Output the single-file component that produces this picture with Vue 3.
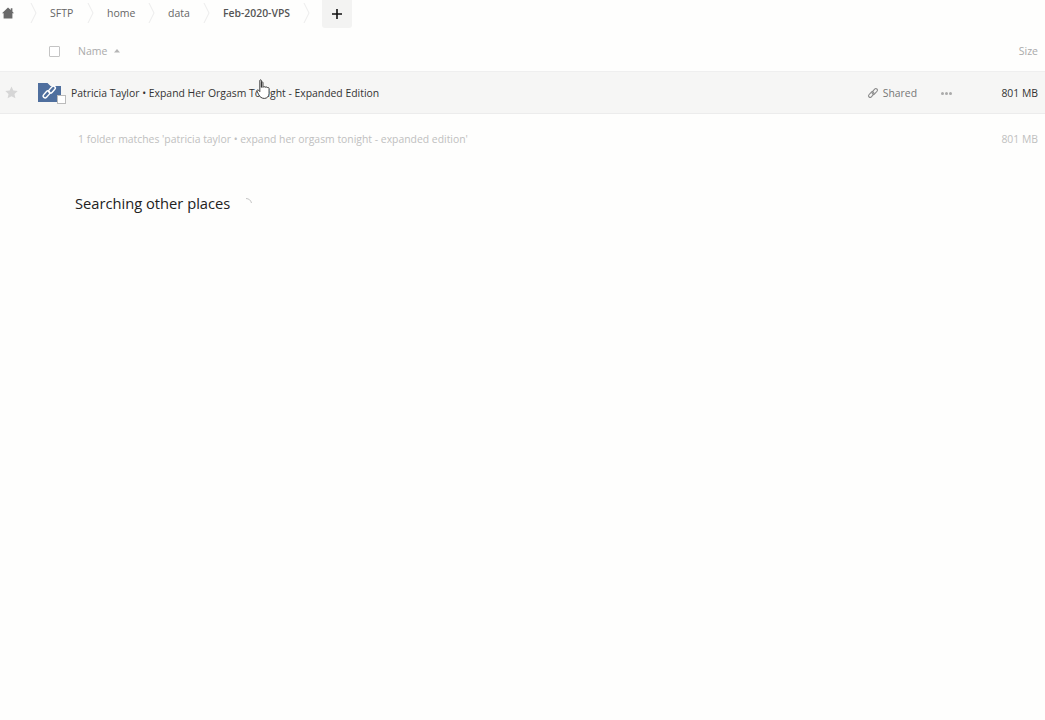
<script setup>
const crumbs = [
  { label: 'SFTP', width: 57 },
  { label: 'home', width: 61 },
  { label: 'data', width: 55 },
  { label: 'Feb-2020-VPS', width: 100, current: true },
]
</script>

<template>
  <div class="page">
    <nav class="crumbs">
      <div class="home">
        <svg width="12" height="12" viewBox="0 0 12 12"><path d="M6 .5 0 6.200h1.600V11.500h8.800V6.200H12L10.400 4.600V1.200H8.800v1.900z" fill="#6a6a6a"/></svg>
      </div>
      <div class="chev first"><svg width="8" height="28" viewBox="0 0 8 28"><path d="M1 3l5 10-5 10" fill="none" stroke="#ececec"/></svg></div>
      <div v-for="c in crumbs" :key="c.label" class="crumb" :class="{ current: c.current }" :style="{ width: c.width + 'px' }">
        <span>{{ c.label }}</span>
        <svg class="sep" width="8" height="28" viewBox="0 0 8 28"><path d="M1 3l5 10-5 10" fill="none" stroke="#ececec"/></svg>
      </div>
      <button class="add">
        <svg width="10" height="10" viewBox="0 0 10 10"><path d="M5 0v10M0 5h10" stroke="#111" stroke-width="1.600"/></svg>
      </button>
    </nav>

    <div class="head">
      <span class="checkbox"></span>
      <span class="name-h">Name</span>
      <svg class="sort" width="6" height="4" viewBox="0 0 6 4"><path d="M3 0l3 3.500H0z" fill="#b5b5b5"/></svg>
      <span class="size-h">Size</span>
    </div>

    <div class="row">
      <svg class="star" width="13" height="13" viewBox="0 0 24 24"><path d="M12 1l3.400 7.400 8.100.9-6 5.500 1.700 8L12 18.700 4.800 22.800l1.700-8-6-5.500 8.100-.9z" fill="#d6d6d6"/></svg>
      <div class="folder">
        <svg width="28" height="21" viewBox="0 0 28 21">
          <path d="M0 0h9.500l3 3H23v16H0z" fill="#4f6f9e"/>
          <g fill="none" stroke="#fff" stroke-width="1.400">
            <rect x="4.500" y="9.500" width="8" height="3.800" rx="1.900" transform="rotate(-48 8.500 11.400)"/>
            <rect x="10" y="4.700" width="8" height="3.800" rx="1.900" transform="rotate(-48 14 6.600)"/>
          </g>
        </svg>
        <span class="overlay-check"></span>
      </div>
      <span class="title">Patricia Taylor • Expand Her Orgasm Tonight - Expanded Edition</span>
      <span class="shared">
        <svg width="12" height="12" viewBox="0 0 12 12" fill="none" stroke="#8a8a8a" stroke-width="1.100">
          <rect x="1" y="6" width="6.500" height="3.200" rx="1.600" transform="rotate(-48 4.250 7.600)"/>
          <rect x="4.500" y="2.800" width="6.500" height="3.200" rx="1.600" transform="rotate(-48 7.750 4.400)"/>
        </svg>
        <span>Shared</span>
      </span>
      <span class="dots"><i></i><i></i><i></i></span>
      <span class="size">801 MB</span>
    </div>

    <div class="summary">
      <span>1 folder matches 'patricia taylor • expand her orgasm tonight - expanded edition'</span>
      <span>801 MB</span>
    </div>

    <div class="searching">
      <span>Searching other places</span>
      <svg width="8" height="8" viewBox="0 0 8 8"><path d="M0 .5A6 6 0 0 1 5.500 5" fill="none" stroke="#c4c4c4"/></svg>
    </div>

    <svg class="cursor" width="15" height="21" viewBox="0 0 14 20">
      <path d="M3.500 1.500c0-1 1.500-1 1.500 0V8V3.500c0-1 1.500-1 1.500 0V8c.5-1 2-1 2 0 .5-.7 2-.7 2 .3 .5-.5 1.800-.3 1.800 .7V14c0 2.500-2 4.500-4.500 4.500S3.500 17 2.500 15L.8 11.500c-.4-1 .8-1.600 1.500-.8L3.500 12z" fill="#fff" stroke="#333" stroke-width=".9" stroke-linejoin="round"/>
    </svg>
  </div>
</template>

<style scoped>
.page {
  position: relative;
  width: 1045px;
  height: 720px;
  overflow: hidden;
  background: #fefefd;
  font-family: "Open Sans", sans-serif;
  font-size: 10.400px;
  color: #222;
}
.crumbs {
  display: flex;
  align-items: flex-start;
  height: 30px;
}
.home {
  width: 27px;
  height: 26px;
  display: flex;
  align-items: center;
  padding: 0 0 0 2px;
  box-sizing: border-box;
}
.chev.first {
  width: 23px;
  padding-left: 3px;
  box-sizing: border-box;
  height: 28px;
  line-height: 0;
}
.crumb {
  flex: none;
  box-sizing: border-box;
  position: relative;
  height: 28px;
  line-height: 27px;
  color: #666;
  font-size: 10.500px;
  white-space: nowrap;
}
.crumb.current {
  color: #555;
  font-weight: 600;
  font-size: 10.400px;
}
.crumb .sep {
  position: absolute;
  right: 12px;
  top: 0;
}
.add {
  margin-left: -1px;
  width: 30px;
  height: 28px;
  border: 0;
  padding: 0;
  border-radius: 0 0 3px 3px;
  background: #f3f3f2;
  display: flex;
  align-items: center;
  justify-content: center;
}
.head {
  height: 42px;
  box-sizing: border-box;
  border-bottom: 1px solid #efefef;
  display: flex;
  align-items: center;
  padding: 1px 7px 0 49px;
  color: #aaa;
  font-size: 10.500px;
}
.checkbox {
  width: 9px;
  height: 9px;
  border: 1px solid #c4c4c4;
  background: #fff;
  border-radius: 1px;
}
.name-h { margin-left: 18px; color: #aaa; }
.sort { margin-left: 7px; }
.size-h { margin-left: auto; }
.row {
  height: 42px;
  box-sizing: border-box;
  background: #f6f6f5;
  border-bottom: 1px solid #ececec;
  display: flex;
  align-items: center;
  padding: 0 7px 0 5px;
  white-space: nowrap;
}
.star { margin-right: 20px; }
.folder {
  position: relative;
  width: 28px;
  height: 21px;
  line-height: 0;
  margin: 2px 5px 0 0;
}
.overlay-check {
  position: absolute;
  left: 19px;
  top: 12px;
  width: 7px;
  height: 7px;
  background: #fff;
  border: 1px solid #bbb;
}
.title { color: #333; }
.shared {
  margin-left: auto;
  display: flex;
  align-items: center;
  gap: 4px;
  color: #777;
}
.dots {
  margin: 2px 0 0 24px;
  display: flex;
  gap: 1px;
  width: 11px;
}
.dots i {
  width: 3px;
  height: 3px;
  border-radius: 50%;
  background: #aaa;
}
.size {
  margin-left: 49px;
  width: 37px;
  text-align: right;
  color: #333;
}
.summary {
  display: flex;
  justify-content: space-between;
  padding: 0 7px 0 78px;
  margin-top: 17px;
  line-height: 17px;
  color: #c0c0c0;
}
.searching {
  display: flex;
  align-items: center;
  gap: 16px;
  padding-left: 75px;
  margin-top: 45px;
  line-height: 20px;
  font-size: 14.700px;
  color: #222;
}
.searching svg { margin-top: -2px; }
.cursor {
  position: absolute;
  left: 256px;
  top: 79px;
}
</style>
